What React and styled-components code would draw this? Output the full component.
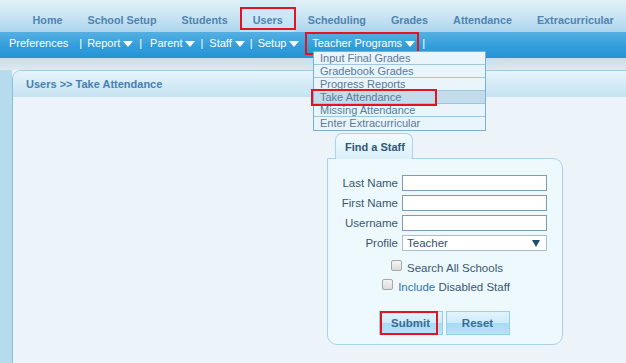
import React from "react";
import styled, { createGlobalStyle } from "styled-components";

const GlobalStyle = createGlobalStyle`
  html, body {
    margin: 0;
    padding: 0;
    background: #ecf4fa;
    font-family: "Liberation Sans", Arial, sans-serif;
  }
`;

const PageStyled = styled.div`
  width: 626px;
  height: 363px;
  overflow: hidden;
  position: relative;
  display: flex;
  flex-direction: column;
  background: #ecf4fa;
`;

const TopNavStyled = styled.nav`
  height: 32px;
  flex-shrink: 0;
  display: flex;
  align-items: stretch;
  padding: 0 0 0 20px;
  background: linear-gradient(#e2f1f9 0%, #cde6f4 45%, #acd5ee 100%);
  white-space: nowrap;
`;

const TopItemStyled = styled.a`
  display: flex;
  align-items: center;
  padding: 8px 12.5px 0;
  font-size: 10.8px;
  font-weight: bold;
  color: #4f84b1;
  text-decoration: none;
  position: relative;
  background: ${({ $active }) => ($active ? "linear-gradient(#d9eef9, #bfe0f3)" : "transparent")};
`;

const HighlightStyled = styled.span`
  position: absolute;
  border: 2px solid #e3141f;
  pointer-events: none;
  box-sizing: border-box;
`;

const SubNavStyled = styled.nav`
  height: 26px;
  flex-shrink: 0;
  display: flex;
  align-items: center;
  padding: 0 0 4px 9px;
  box-sizing: border-box;
  background: linear-gradient(#55b0e2 0%, #2f9cda 60%, #2793d4 100%);
  color: #ffffff;
  font-size: 11px;
  white-space: nowrap;
  position: relative;
`;

const SubItemStyled = styled.span`
  display: inline-flex;
  align-items: center;
  gap: 3px;
  position: relative;
`;

const CaretStyled = styled.span`
  width: 0;
  height: 0;
  border-left: 5px solid transparent;
  border-right: 5px solid transparent;
  border-top: 6px solid #ffffff;
  margin-top: 1px;
`;

const SepStyled = styled.span`
  margin: 0 ${({ $r }) => $r}px 0 ${({ $l }) => $l}px;
`;

const MenuStyled = styled.ul`
  position: absolute;
  left: 313px;
  top: 51px;
  width: 171px;
  margin: 0;
  padding: 0;
  list-style: none;
  background: #eaf4fb;
  border: 1px solid #7ab0d6;
  z-index: 5;
`;

const MenuItemStyled = styled.li`
  height: 13px;
  line-height: 12px;
  padding: 0 6px;
  font-size: 11px;
  color: #5a7b99;
  border-bottom: 1px solid #9cc6e2;
  box-sizing: border-box;
  background: ${({ $active }) => ($active ? "#c2dcec" : "transparent")};
  &:last-child {
    border-bottom: 0;
  }
`;

const StripStyled = styled.div`
  height: 12px;
  flex-shrink: 0;
  background: linear-gradient(#c9dce8, #dfe9ee);
`;

const MainStyled = styled.div`
  flex: 1;
  display: flex;
  background: linear-gradient(90deg, #b5dbec 0px, #b5dbec 12px, transparent 12px);
`;

const PanelStyled = styled.section`
  margin-left: 12px;
  flex: 1;
  border-left: 1px solid #86c2de;
  border-top: 1px solid #9fcbe2;
  border-top-left-radius: 9px;
  background: #ecf4fa;
  display: flex;
  flex-direction: column;
`;

const PanelHeaderStyled = styled.h1`
  margin: 0;
  height: 26px;
  padding: 0 0 0 13px;
  display: flex;
  align-items: center;
  font-size: 11px;
  font-weight: bold;
  color: #4680b3;
  border-top-left-radius: 8px;
  background: linear-gradient(#e6f4fb, #c5e2f2);
`;

const PanelBodyStyled = styled.div`
  padding: 36px 0 0 314px;
  display: flex;
  flex-direction: column;
  align-items: flex-start;
`;

const TabStyled = styled.div`
  margin-left: 8px;
  width: 78px;
  height: 26px;
  box-sizing: border-box;
  border: 1px solid #a9d4e9;
  border-bottom: 0;
  border-radius: 7px 7px 0 0;
  background: linear-gradient(#f3fbfe, #d9eff9);
  display: flex;
  align-items: center;
  padding-left: 9px;
  font-size: 11px;
  font-weight: bold;
  color: #2f5877;
  position: relative;
  z-index: 1;
  margin-bottom: -1px;
`;

const FormBoxStyled = styled.form`
  width: 236px;
  height: 187px;
  box-sizing: border-box;
  border: 1px solid #a6d2e7;
  border-radius: 0 10px 10px 10px;
  background: #edf9fd;
  padding: 16px 0 0 4px;
  display: flex;
  flex-direction: column;
`;

const FieldGridStyled = styled.div`
  display: grid;
  grid-template-columns: 66px 145px;
  grid-auto-rows: 16px;
  column-gap: 4px;
  row-gap: 4px;
  align-items: center;
`;

const LabelStyled = styled.label`
  text-align: right;
  font-size: 11.5px;
  color: #3b5770;
  white-space: nowrap;
`;

const InputStyled = styled.input`
  width: 145px;
  height: 16px;
  box-sizing: border-box;
  border: 1px solid #7d9bb8;
  background: #ffffff;
  margin: 0;
  padding: 0 3px;
`;

const SelectStyled = styled.div`
  width: 145px;
  height: 16px;
  box-sizing: border-box;
  border: 1px solid #a8bfd2;
  background: #ffffff;
  display: flex;
  align-items: center;
  justify-content: space-between;
  padding: 0 6px 0 4px;
  font-size: 11.5px;
  color: #34516b;
`;

const SelectArrowStyled = styled.span`
  width: 0;
  height: 0;
  border-left: 4px solid transparent;
  border-right: 4px solid transparent;
  border-top: 7px solid #1f4d6f;
`;

const CheckRowStyled = styled.div`
  display: flex;
  align-items: center;
  justify-content: center;
  gap: 5px;
  height: 19px;
  padding-right: ${({ $shift }) => $shift}px;
  font-size: 11.5px;
  color: #3b5770;
  margin-top: ${({ $top }) => $top}px;
`;

const CheckboxStyled = styled.span`
  width: 11px;
  height: 11px;
  box-sizing: border-box;
  border: 1px solid #a2a8ad;
  border-radius: 2px;
  background: linear-gradient(#f4f4f4, #dcdcdc);
  margin-top: -4px;
`;

const LinkWordStyled = styled.span`
  color: #2e74b5;
`;

const ButtonRowStyled = styled.div`
  display: flex;
  justify-content: center;
  gap: 3px;
  margin-top: 15px;
  padding-right: 6px;
`;

const ButtonStyled = styled.button`
  width: 64px;
  height: 24px;
  position: relative;
  border: 1px solid #94d0ee;
  background: linear-gradient(#e2f4fd 0%, #cdebfa 48%, #a7dbf5 52%, #b9e3f8 100%);
  font-family: "Liberation Sans", Arial, sans-serif;
  font-size: 11.5px;
  font-weight: bold;
  color: #3c6b92;
  padding: 0;
`;

const topItems = ["Home", "School Setup", "Students", "Users", "Scheduling", "Grades", "Attendance", "Extracurricular"];

const menuItems = [
  "Input Final Grades",
  "Gradebook Grades",
  "Progress Reports",
  "Take Attendance",
  "Missing Attendance",
  "Enter Extracurricular",
];

const App = () => {
  return (
    <>
      <GlobalStyle />
      <PageStyled>
        <TopNavStyled>
          {topItems.map((item) => (
            <TopItemStyled key={item} $active={item === "Users"}>
              {item}
              {item === "Users" && <HighlightStyled style={{ left: 0, right: -1, top: 7, bottom: 2 }} />}
            </TopItemStyled>
          ))}
        </TopNavStyled>

        <SubNavStyled>
          <SubItemStyled>Preferences</SubItemStyled>
          <SepStyled $l={11} $r={5}>|</SepStyled>
          <SubItemStyled>Report<CaretStyled /></SubItemStyled>
          <SepStyled $l={6} $r={8}>|</SepStyled>
          <SubItemStyled>Parent<CaretStyled /></SubItemStyled>
          <SepStyled $l={5} $r={6}>|</SepStyled>
          <SubItemStyled>Staff<CaretStyled /></SubItemStyled>
          <SepStyled $l={5} $r={5}>|</SepStyled>
          <SubItemStyled>Setup<CaretStyled /></SubItemStyled>
          <SepStyled $l={5} $r={5}>|</SepStyled>
          <SubItemStyled>
            Teacher Programs<CaretStyled />
            <HighlightStyled style={{ left: -7, right: -4, top: -5, bottom: -6 }} />
          </SubItemStyled>
          <SepStyled $l={7} $r={0}>|</SepStyled>
        </SubNavStyled>

        <MenuStyled>
          {menuItems.map((item) => (
            <MenuItemStyled key={item} $active={item === "Take Attendance"}>
              {item}
            </MenuItemStyled>
          ))}
        </MenuStyled>
        <HighlightStyled style={{ left: 311, top: 89, width: 126, height: 17, zIndex: 6 }} />

        <StripStyled />

        <MainStyled>
          <PanelStyled>
            <PanelHeaderStyled>Users &gt;&gt; Take Attendance</PanelHeaderStyled>
            <PanelBodyStyled>
              <TabStyled>Find a Staff</TabStyled>
              <FormBoxStyled onSubmit={(e) => e.preventDefault()}>
                <FieldGridStyled>
                  <LabelStyled>Last Name</LabelStyled>
                  <InputStyled />
                  <LabelStyled>First Name</LabelStyled>
                  <InputStyled />
                  <LabelStyled>Username</LabelStyled>
                  <InputStyled />
                  <LabelStyled>Profile</LabelStyled>
                  <SelectStyled>
                    Teacher
                    <SelectArrowStyled />
                  </SelectStyled>
                </FieldGridStyled>
                <CheckRowStyled $top={7} $shift={0}>
                  <CheckboxStyled />
                  Search All Schools
                </CheckRowStyled>
                <CheckRowStyled $top={0} $shift={2}>
                  <CheckboxStyled />
                  <span><LinkWordStyled>Include</LinkWordStyled> Disabled Staff</span>
                </CheckRowStyled>
                <ButtonRowStyled>
                  <ButtonStyled type="button">
                    Submit
                    <HighlightStyled style={{ left: 0, top: -1, right: 4, bottom: -1 }} />
                  </ButtonStyled>
                  <ButtonStyled type="button">Reset</ButtonStyled>
                </ButtonRowStyled>
              </FormBoxStyled>
            </PanelBodyStyled>
          </PanelStyled>
        </MainStyled>
      </PageStyled>
    </>
  );
};

export default App;
